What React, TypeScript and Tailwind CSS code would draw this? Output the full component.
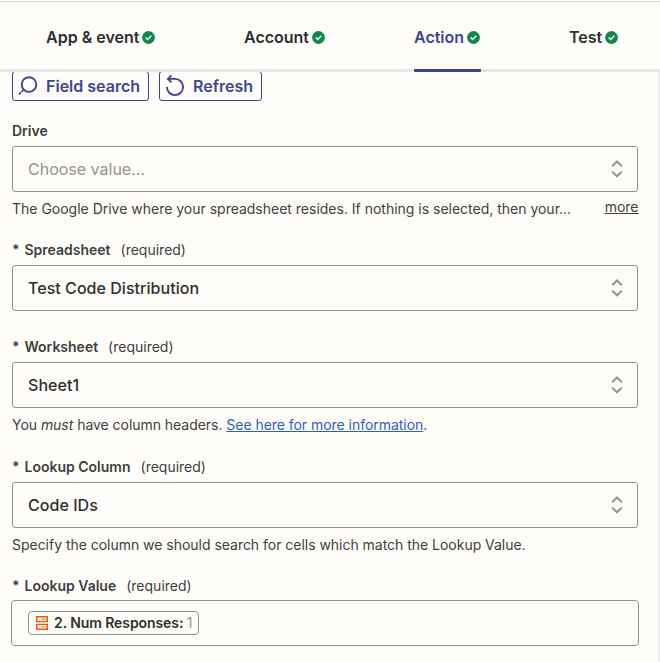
import type { ReactNode } from "react";

function CheckBadge() {
  return (
    <svg width="13" height="13" viewBox="0 0 13 13" className="shrink-0">
      <circle cx="6.5" cy="6.5" r="6.4" fill="#0f884e" />
      <path d="M3.7 6.6 5.6 8.4 9.3 4.7" fill="none" stroke="#fffdf9" strokeWidth="1.4" />
    </svg>
  );
}

function Tab({ label, width, active = false }: { label: string; width: string; active?: boolean }) {
  return (
    <div
      className={`flex h-[70px] items-center justify-between border-b-[3px] pt-[3px] text-base font-semibold whitespace-nowrap ${width} ${
        active ? "rounded-b-[1px] border-[#3d4592] pr-px text-[#3d4592]" : "border-transparent text-[#2d2e2e]"
      }`}
    >
      <span>{label}</span>
      <CheckBadge />
    </div>
  );
}

function SelectIcon() {
  return (
    <svg width="12" height="18" viewBox="0 0 12 18" fill="none" stroke="#95928e" strokeWidth="2">
      <path d="M1.2 6.2 6 1.5l4.8 4.7M1.2 11.6 6 16.3l4.8-4.7" />
    </svg>
  );
}

function Label({ children, required = true }: { children: string; required?: boolean }) {
  return (
    <div className="flex h-5 items-center text-sm leading-5 text-[#403f3e]">
      {required && <span className="w-[12.5px] font-semibold">*</span>}
      <span className="font-semibold">{children}</span>
      {required && <span className="ml-[10px]">(required)</span>}
    </div>
  );
}

function Select({ children, placeholder = false }: { children: string; placeholder?: boolean }) {
  return (
    <div
      className={`mt-[5px] flex h-[46px] items-center justify-between rounded-[3px] border border-[#95928e] pr-[14px] pl-[15px] text-base ${
        placeholder ? "text-[#95928e]" : "font-medium tracking-[0.04px] text-[#2d2e2e]"
      }`}
    >
      <span>{children}</span>
      <SelectIcon />
    </div>
  );
}

function Help({ children, tracking = "tracking-[-0.025px]" }: { children: ReactNode; tracking?: string }) {
  return (
    <p className={`mt-[7px] h-5 text-sm leading-5 whitespace-nowrap text-[#403f3e] ${tracking}`}>{children}</p>
  );
}

function ToolButton({ icon, label, width }: { icon: ReactNode; label: string; width: string }) {
  return (
    <button
      className={`flex h-[30px] items-center justify-between rounded-[3px] border border-[#3d4592] pr-[8px] pl-[5px] text-base font-semibold whitespace-nowrap text-[#3d4592] ${width}`}
    >
      {icon}
      <span>{label}</span>
    </button>
  );
}

export default function App() {
  return (
    <div className="flex h-[662px] w-[660px] flex-col overflow-hidden bg-[#fffdf9] font-['Inter',sans-serif]">
      <header className="mt-px h-[71px] shrink-0 border-t border-b-[3px] border-t-[#d7d5d2] border-b-[#e8e7e4]">
        <nav className="flex pl-[46px]">
          <Tab label="App & event" width="w-[109px]" />
          <div className="w-[89px]" />
          <Tab label="Account" width="w-[81px]" />
          <div className="w-[89px]" />
          <Tab label="Action" width="w-[67px]" active />
          <div className="w-[88px]" />
          <Tab label="Test" width="w-[49px]" />
        </nav>
      </header>
      <main className="flex-1 overflow-hidden border-r-2 border-[#f0f0f0] pr-5 pl-3">
        <div className="-mt-px flex gap-[10px]">
          <ToolButton
            label="Field search"
            width="w-[137px]"
            icon={
              <svg width="20" height="20" viewBox="0 0 20 20" fill="none" stroke="#3d4592" strokeWidth="1.9">
                <circle cx="11" cy="8.6" r="7.3" />
                <path d="m5 14.3-1.6 1.6M2.8 16.5.9 18.4" />
              </svg>
            }
          />
          <ToolButton
            label="Refresh"
            width="w-[103px]"
            icon={
              <svg width="20" height="20" viewBox="0 0 20 20" fill="none" stroke="#3d4592" strokeWidth="1.9" className="overflow-visible">
                <path d="M1.9 11a8.1 8.1 0 1 0 8.1-8.1H3.2M6.4-.6 2.9 2.9l3.5 3.5" />
              </svg>
            }
          />
        </div>

        <section className="mt-5">
          <Label required={false}>Drive</Label>
          <Select placeholder>Choose value...</Select>
          <div className="flex justify-between">
            <Help tracking="tracking-[-0.008px]">
              The Google Drive where your spreadsheet resides. If nothing is selected, then your...
            </Help>
            <a className="mt-[5px] -mr-[0.5px] h-5 text-sm leading-5 text-[#403f3e] underline">more</a>
          </div>
        </section>

        <section className="mt-[21px]">
          <Label>Spreadsheet</Label>
          <Select>Test Code Distribution</Select>
        </section>

        <section className="mt-[26px]">
          <Label>Worksheet</Label>
          <Select>Sheet1</Select>
          <Help tracking="tracking-[-0.04px]">
            You <em>must</em> have column headers.{" "}
            <a className="text-[#2b5fc7] underline">See here for more information</a>.
          </Help>
        </section>

        <section className="mt-[22px]">
          <Label>Lookup Column</Label>
          <Select>Code IDs</Select>
          <Help>Specify the column we should search for cells which match the Lookup Value.</Help>
        </section>

        <section className="mt-[21px]">
          <Label>Lookup Value</Label>
          <div className="-mr-px -ml-px mt-1 flex h-[46px] items-center rounded-[4px] border border-[#95928e] pl-4">
            <div className="flex h-6 w-[171px] items-center rounded-[4px] border border-[#95928e] pl-[7px] text-sm whitespace-nowrap">
              <svg width="12" height="14" viewBox="0 0 12 14" fill="none" stroke="#ff4f00" strokeWidth="1.4">
                <path d="M.7.7h10.6v4.9H.7zM.7 8.4h10.6v4.9H.7z" />
                <path d="M5.5 3.2h3M9.2 3.2h1M5.5 10.9h3M9.2 10.9h1" strokeWidth="1" />
              </svg>
              <span className="ml-[6px] font-semibold tracking-[-0.08px] text-[#2d2e2e]">2. Num Responses:</span>
              <span className="ml-[3.5px] text-[#95928e]">1</span>
            </div>
          </div>
        </section>
      </main>
    </div>
  );
}
